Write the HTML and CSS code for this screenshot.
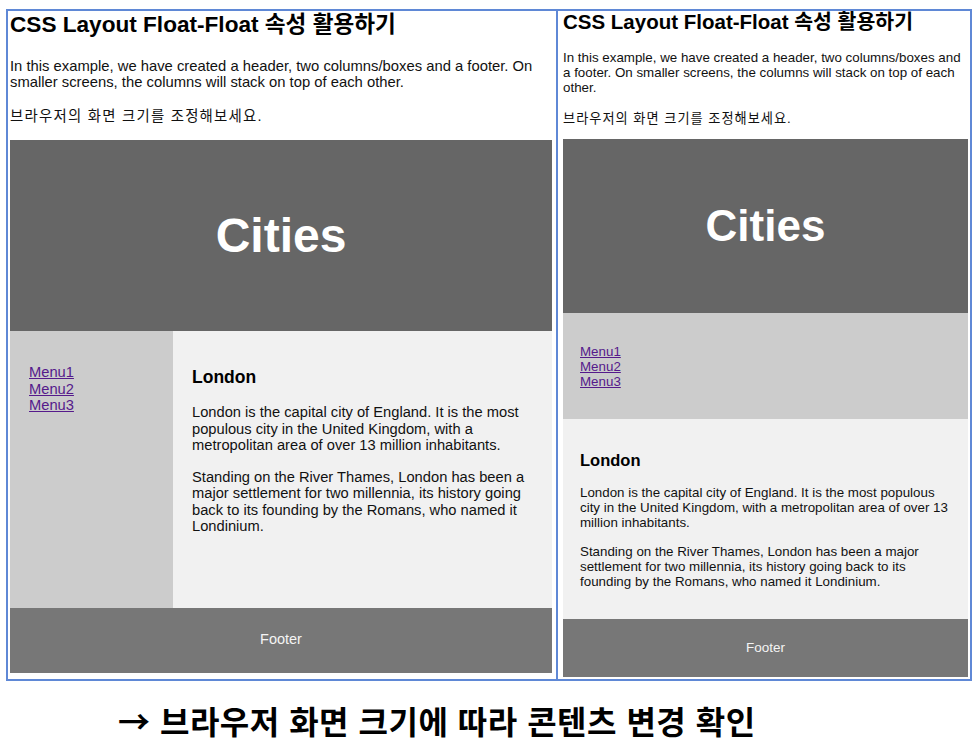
FILE: index.html
```html
<!DOCTYPE html>
<html lang="ko">
<head>
<meta charset="utf-8">
<title>CSS Layout Float</title>
<link rel="stylesheet" href="styles.css">
</head>
<body>
<div class="frame">
  <section class="panel panel-l">
    <h1 class="title">CSS Layout Float-Float 속성 활용하기</h1>
    <p class="intro">In this example, we have created a header, two columns/boxes and a footer. On smaller screens, the columns will stack on top of each other.</p>
    <p class="ko">브라우저의 화면 크기를 조정해보세요.</p>
    <header class="hdr"><h2>Cities</h2></header>
    <div class="row">
      <nav class="nav">
        <a href="#">Menu1</a>
        <a href="#">Menu2</a>
        <a href="#">Menu3</a>
      </nav>
      <article class="art">
        <h3>London</h3>
        <p>London is the capital city of England. It is the most populous city in the United Kingdom, with a metropolitan area of over 13 million inhabitants.</p>
        <p class="p2">Standing on the River Thames, London has been a major settlement for two millennia, its history going back to its founding by the Romans, who named it Londinium.</p>
      </article>
    </div>
    <footer class="ftr">Footer</footer>
  </section>
  <section class="panel panel-r">
    <h1 class="title">CSS Layout Float-Float 속성 활용하기</h1>
    <p class="intro">In this example, we have created a header, two columns/boxes and a footer. On smaller screens, the columns will stack on top of each other.</p>
    <p class="ko">브라우저의 화면 크기를 조정해보세요.</p>
    <header class="hdr"><h2>Cities</h2></header>
    <nav class="nav">
      <a href="#">Menu1</a>
      <a href="#">Menu2</a>
      <a href="#">Menu3</a>
    </nav>
    <article class="art">
      <h3>London</h3>
      <p>London is the capital city of England. It is the most populous city in the United Kingdom, with a metropolitan area of over 13 million inhabitants.</p>
      <p class="p2">Standing on the River Thames, London has been a major settlement for two millennia, its history going back to its founding by the Romans, who named it Londinium.</p>
    </article>
    <footer class="ftr">Footer</footer>
  </section>
</div>
<p class="caption">→ 브라우저 화면 크기에 따라 콘텐츠 변경 확인</p>
</body>
</html>
```
FILE: styles.css
```css
* { box-sizing: border-box; }
html, body { margin: 0; padding: 0; background: #fff; }
body {
  font-family: "Liberation Sans", "Noto Sans CJK KR", sans-serif;
  color: #111;
}
.frame {
  margin: 9px 0 0 6px;
  width: 966px;
  height: 672px;
  border: 2px solid #5f88d6;
  display: flex;
}
.panel { display: flex; flex-direction: column; }
.panel h1, .panel h2, .panel h3, .panel p { margin: 0; }

/* Left (wide) panel */
.panel-l {
  width: 550px;
  padding: 0 4px 0 2px;
  border-right: 2px solid #5f88d6;
}
.panel-l .title { margin-top: 1px; font-size: 22.6px; line-height: 25px; font-weight: bold; color: #000; }
.panel-l .intro { margin-top: 21px; font-size: 14.8px; line-height: 16px; }
.panel-l .ko { margin-top: 18px; font-size: 14.4px; line-height: 16px; letter-spacing: 1.25px; }
.panel-l .hdr { margin-top: 16px; height: 191px; }
.panel-l .hdr h2 { font-size: 48px; }
.panel-l .row { display: flex; height: 277px; }
.panel-l .nav { width: 163px; background: #ccc; padding: 33px 0 0 19px; font-size: 14.7px; line-height: 16.5px; }
.panel-l .art { flex: 1; background: #f1f1f1; padding: 36px 19px 0 19px; font-size: 14.7px; line-height: 16.5px; }
.panel-l .art h3 { font-size: 17.5px; line-height: 20px; }
.panel-l .art p { margin-top: 17px; }
.panel-l .art .p2 { margin-top: 15px; }
.panel-l .ftr { height: 65px; font-size: 14.5px; padding-bottom: 3px; }

/* Right (narrow) panel */
.panel-r {
  width: 412px;
  padding: 0 2px 0 5px;
}
.panel-r .title { font-size: 20.5px; line-height: 22px; font-weight: bold; color: #000; }
.panel-r .intro { margin-top: 16.5px; font-size: 13.35px; line-height: 15px; }
.panel-r .ko { margin-top: 16px; font-size: 13.2px; line-height: 15px; letter-spacing: 1px; }
.panel-r .hdr { margin-top: 13.5px; height: 174px; }
.panel-r .hdr h2 { font-size: 44px; }
.panel-r .nav { height: 106px; background: #ccc; padding: 30.5px 0 0 17px; font-size: 13.35px; line-height: 15px; }
.panel-r .art { height: 200px; background: #f1f1f1; padding: 31.5px 15px 0 17px; font-size: 13.35px; line-height: 15px; }
.panel-r .art h3 { font-size: 16.5px; line-height: 19px; }
.panel-r .art p { margin-top: 15px; }
.panel-r .art .p2 { margin-top: 14px; }
.panel-r .ftr { height: 58px; font-size: 13.5px; padding-bottom: 2px; }

.hdr {
  background: #666;
  color: #fff;
  display: flex;
  align-items: center;
  justify-content: center;
}
.hdr h2 { font-weight: bold; line-height: 1; }
.nav { display: flex; flex-direction: column; align-items: flex-start; }
.nav a { color: #551a8b; text-decoration: underline; }
.art { color: #111; }
.art h3 { font-weight: bold; color: #000; }
.ftr {
  background: #777;
  color: #f4f4f4;
  display: flex;
  align-items: center;
  justify-content: center;
}

.caption {
  margin: 18px 0 0 118px;
  font-family: "Noto Sans CJK KR", sans-serif;
  font-size: 32px;
  line-height: 42px;
  font-weight: bold;
  letter-spacing: 0.5px;
  color: #000;
}
```
